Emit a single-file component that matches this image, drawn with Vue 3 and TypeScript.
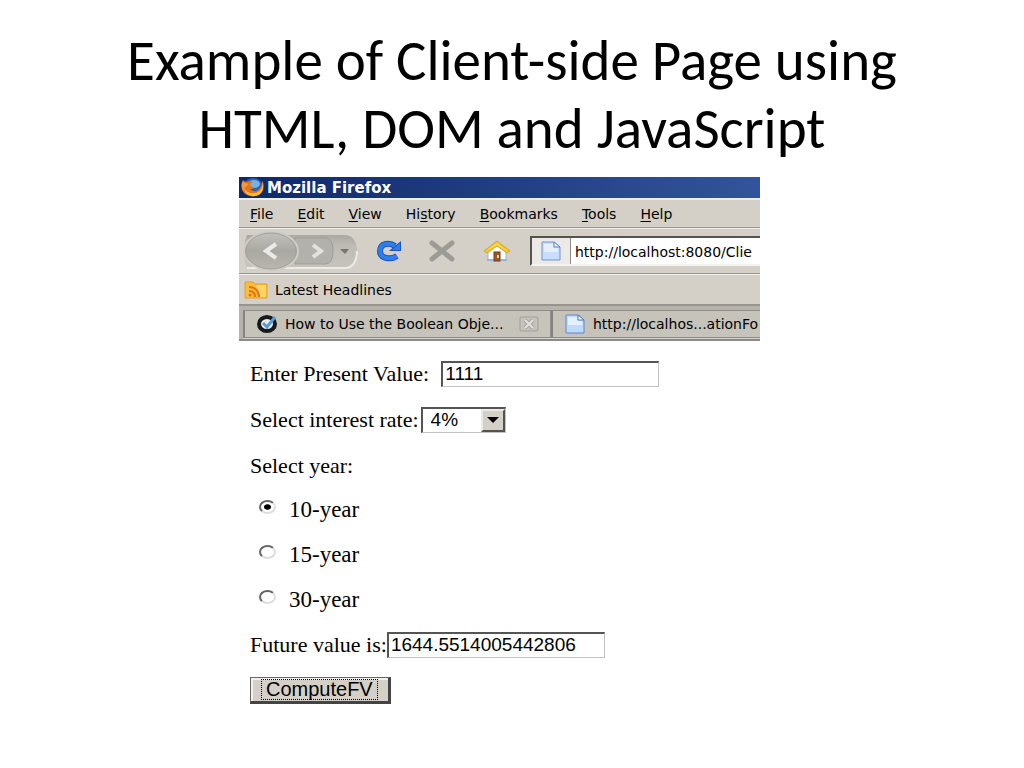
<script setup lang="ts">
import { ref } from 'vue'

interface MenuEntry {
  before: string
  key: string
  after: string
}

const menus: MenuEntry[] = [
  { before: '', key: 'F', after: 'ile' },
  { before: '', key: 'E', after: 'dit' },
  { before: '', key: 'V', after: 'iew' },
  { before: 'Hi', key: 's', after: 'tory' },
  { before: '', key: 'B', after: 'ookmarks' },
  { before: '', key: 'T', after: 'ools' },
  { before: '', key: 'H', after: 'elp' },
]

const years: number[] = [10, 15, 30]
const address = ref('http://localhost:8080/Clie')
const presentValue = ref('1111')
const rate = ref(4)
const year = ref(10)
const futureValue = ref('1644.5514005442806')

function computeFV(): void {
  futureValue.value = String(Number(presentValue.value) * Math.pow(1 + rate.value / 100, year.value))
}
</script>

<template>
  <main class="slide">
    <h1 class="heading">Example of Client-side Page using<br />HTML, DOM and JavaScript</h1>

    <section class="window">
      <header class="titlebar">
        <svg class="firefox" width="26" height="20" viewBox="0 0 26 20">
          <ellipse cx="14" cy="9" rx="10" ry="9" fill="#2b62b5" />
          <ellipse cx="15" cy="6" rx="6" ry="4" fill="#6fb4e6" />
          <path d="M4 2C1 7 2 14 8 17c6 3 14 1 16-5 1-3 1-7-1-9 0 3 0 5-2 7-2 4-8 4-10 1 2 0 3 0 4-2-3 0-4-2-4-3 1-1 2-1 3-2-2-1-4-1-6 0-2 0-3-1-4-2z" fill="#e8741a" />
          <path d="M23 4c1 5-1 10-7 11-5 1-9-1-11-5 1 6 5 8 10 8 7 0 11-7 8-14z" fill="#f9c22e" />
          <path d="M4 3c-2 4-1 8 1 10 0-3 1-4 3-5 0-1 1-2 2-2-2-1-5 0-6-3z" fill="#f59a30" />
        </svg>
        <span>Mozilla Firefox</span>
      </header>

      <nav class="menubar">
        <button v-for="m in menus" :key="m.key + m.after" type="button" class="menu">{{ m.before }}<u>{{ m.key }}</u>{{ m.after }}</button>
      </nav>

      <div class="toolbar">
        <button type="button" class="tool" aria-label="Back and forward">
          <svg width="118" height="42" viewBox="0 0 118 42">
            <defs>
              <linearGradient id="pill" x1="0" y1="0" x2="0" y2="1">
                <stop offset="0" stop-color="#aaa8a2" />
                <stop offset="0.35" stop-color="#bfbcb5" />
                <stop offset="1" stop-color="#c7c4bd" />
              </linearGradient>
              <linearGradient id="disc" x1="0" y1="0" x2="0" y2="1">
                <stop offset="0" stop-color="#c3c1bb" />
                <stop offset="0.5" stop-color="#aaa8a2" />
                <stop offset="1" stop-color="#bab7b0" />
              </linearGradient>
            </defs>
            <path d="M6 5h98c9 0 12 9 12 16s-3 17-12 17H6c-4-9-4-24 0-33z" fill="url(#pill)" />
            <path d="M6 38h98c9 0 12-9 12-17" fill="none" stroke="#eceae5" stroke-width="2" />
            <path d="M54 8h30c6 0 8 6 8 13s-2 13-8 13H54z" fill="#b3b1ab" stroke="#9f9d97" />
            <ellipse cx="30" cy="21" rx="27" ry="19" fill="url(#disc)" stroke="#cfccc5" stroke-width="2" />
            <ellipse cx="30" cy="21" rx="25" ry="18" fill="none" stroke="#a3a19b" />
            <path d="M35 14l-10 7 10 7" fill="none" stroke="#eceae6" stroke-width="4" />
            <path d="M72 15l8 6-8 6" fill="none" stroke="#e3e1dc" stroke-width="4" />
            <path d="M99 19h9l-4 5z" fill="#77756f" />
          </svg>
        </button>
        <button type="button" class="tool reload" aria-label="Reload">
          <svg width="26" height="22" viewBox="0 0 26 22">
            <path d="M19 6C14 2 4 3 4 11c0 8 11 9 17 5" fill="none" stroke="#1755c2" stroke-width="6" />
            <path d="M25 1v10H13z" fill="#1755c2" />
            <path d="M19 6C14 2 4 3 4 11c0 8 11 9 17 5" fill="none" stroke="#2f7fe8" stroke-width="4" />
            <path d="M24 3v7h-8z" fill="#2f7fe8" />
          </svg>
        </button>
        <button type="button" class="tool stop" aria-label="Stop">
          <svg width="26" height="22" viewBox="0 0 26 22">
            <path d="M3 3l20 16M23 3L3 19" fill="none" stroke="#9d9b96" stroke-width="5" stroke-linecap="round" />
          </svg>
        </button>
        <button type="button" class="tool home" aria-label="Home">
          <svg width="28" height="22" viewBox="0 0 28 22">
            <path d="M5 11v9h18v-9l-9-7z" fill="#fff" stroke="#a4b4cc" />
            <path d="M14 1L1 11l3 2 10-7 10 7 3-2z" fill="#f8c92e" stroke="#d5a52c" />
            <path d="M14 3l9 7-9-5-9 5z" fill="#fbd95c" />
            <rect x="11" y="12" width="6" height="9" fill="#9b5a2b" stroke="#6b3c1b" />
            <rect x="14" y="15" width="2" height="3" fill="#e8d48a" />
            <path d="M4 20h6M18 20h6" stroke="#94b5df" stroke-width="2" />
          </svg>
        </button>
        <div class="address">
          <span class="site">
            <svg width="20" height="20" viewBox="0 0 20 20">
              <path d="M1 1h12l6 5v13H1z" fill="#c9defc" stroke="#6f94cd" />
              <path d="M3 3h9v4h5v4H3z" fill="#e4efff" />
              <path d="M13 1v5h6z" fill="#f6faff" stroke="#5f83bd" />
            </svg>
          </span>
          <input v-model="address" type="text" class="url" aria-label="Address" />
        </div>
      </div>

      <div class="bookmarks">
        <svg width="24" height="18" viewBox="0 0 24 18">
          <path d="M1 1h8l2 2h12v14H1z" fill="#f9bd3c" stroke="#e2a02d" />
          <path d="M12 4h10v12H14z" fill="#fdd468" />
          <circle cx="6" cy="14" r="1.5" fill="#e8700f" />
          <path d="M5 10c4 0 6 2 6 6M5 6c6 0 10 4 10 10" fill="none" stroke="#e8700f" stroke-width="2" />
        </svg>
        <a href="#headlines">Latest Headlines</a>
      </div>

      <div class="tabs">
        <div class="tab first">
          <svg width="22" height="18" viewBox="0 0 22 18">
            <ellipse cx="11" cy="9" rx="8" ry="7" fill="#e4eef5" stroke="#17191c" stroke-width="4" />
            <path d="M7 8l4 4 8-10" fill="none" stroke="#5a9bd0" stroke-width="3" />
          </svg>
          <a href="#boolean" class="label">How to Use the Boolean Obje...</a>
          <button type="button" class="close" aria-label="Close tab">
            <svg width="20" height="16" viewBox="0 0 20 16">
              <rect x="1" y="1" width="18" height="14" rx="1" fill="#c5c2bb" stroke="#a19f99" />
              <path d="M6 4l8 8M14 4l-8 8" stroke="#a5a39d" stroke-width="4" />
              <path d="M6 4l8 8M14 4l-8 8" stroke="#e4e2dd" stroke-width="2" />
            </svg>
          </button>
        </div>
        <div class="tab second">
          <svg width="20" height="20" viewBox="0 0 20 20">
            <path d="M1 1h12l6 5v13H1z" fill="#c1d9fc" stroke="#5d87cb" />
            <path d="M3 3h9v4h5v4H3z" fill="#e4efff" />
            <path d="M13 1v5h6z" fill="#f6faff" stroke="#4f79bd" />
          </svg>
          <a href="#form" class="label">http://localhos...ationFo</a>
        </div>
      </div>

      <form class="page" @submit.prevent="computeFV">
        <div class="row">
          <label for="pv">Enter Present Value:</label>
          <input id="pv" v-model="presentValue" type="text" class="field gap" />
        </div>
        <div class="row">
          <label for="rate">Select interest rate:</label>
          <span class="picker">
            <select id="rate" v-model.number="rate">
              <option v-for="r in [4, 5, 6, 7, 8]" :key="r" :value="r">{{ r }}%</option>
            </select>
            <span class="arrow">
              <svg width="12" height="6" viewBox="0 0 12 6"><path d="M0 0h12L6 6z" fill="#000" /></svg>
            </span>
          </span>
        </div>
        <fieldset class="years">
          <legend>Select year:</legend>
          <label v-for="y in years" :key="y" class="year">
            <input v-model="year" type="radio" name="year" :value="y" />
            <span>{{ y }}-year</span>
          </label>
        </fieldset>
        <div class="row last">
          <label for="fv">Future value is:</label>
          <input id="fv" v-model="futureValue" type="text" class="field" />
        </div>
        <button type="submit" class="compute"><span>ComputeFV</span></button>
      </form>
    </section>
  </main>
</template>

<style>
body {
  margin: 0;
  background: #fff;
}
</style>

<style scoped>
* {
  box-sizing: border-box;
}
svg {
  display: block;
  flex: none;
}
button {
  padding: 0;
  border: 0;
  background: none;
  font: inherit;
  color: inherit;
}
a {
  color: inherit;
  text-decoration: none;
}
.slide {
  display: grid;
  grid-template-columns: 239fr 521fr 264fr;
  color: #000;
}
.heading {
  grid-column: 1 / -1;
  margin: 0;
  padding: 27px 0 14px;
  text-align: center;
  font: 400 57px/68px Carlito, Lato, sans-serif;
}
.window {
  grid-column: 2;
  min-width: 0;
  font: 14px/18px "DejaVu Sans", sans-serif;
}
.titlebar {
  display: flex;
  align-items: center;
  gap: 2px;
  height: 21px;
  overflow: hidden;
  background: linear-gradient(90deg, #10286a, #33549a);
  color: #fff;
  font-size: 15px;
  font-weight: 700;
}
.menubar {
  display: flex;
  gap: 24px;
  padding: 5px 11px 4px;
  border-top: 2px solid #efede8;
  border-bottom: 1px solid #97958f;
  background: #d4d0c8;
}
.menu {
  white-space: nowrap;
}
.menu u {
  text-underline-offset: 2px;
}
.toolbar {
  display: flex;
  align-items: center;
  height: 46px;
  padding-left: 2px;
  border-top: 1px solid #f3f1ed;
  border-bottom: 1px solid #97958f;
  background: #d4d0c8;
}
.tool {
  flex: none;
}
.reload {
  margin-left: 17px;
}
.stop {
  margin-left: 27px;
}
.home {
  margin-left: 28px;
}
.address {
  display: flex;
  flex: 1;
  min-width: 0;
  height: 30px;
  margin-left: 19px;
  border: 2px solid #55534f;
  border-right: 0;
  border-bottom: 2px solid #f4f2ee;
  background: #fff;
}
.site {
  display: flex;
  align-items: center;
  padding: 0 9px;
  border-right: 1px solid #8c8a85;
  background: #eceae6;
}
.url {
  flex: 1;
  min-width: 0;
  padding: 2px 0 0 4px;
  border: 0;
  outline: 0;
  background: transparent;
  font: inherit;
}
.bookmarks {
  display: flex;
  align-items: center;
  gap: 7px;
  height: 30px;
  padding-left: 5px;
  border-top: 1px solid #f3f1ed;
  background: #d4d0c8;
}
.tabs {
  display: flex;
  height: 37px;
  padding: 4px 0 0 4px;
  overflow: hidden;
  border-top: 2px solid #96948f;
  border-bottom: 2px solid #8c8a86;
  background: #b6b3ac;
}
.tab {
  display: flex;
  align-items: center;
  height: 28px;
  border: 1px solid #8f8d88;
  border-left: 2px solid #85837f;
  background: #c6c3bb;
  white-space: nowrap;
  box-shadow: 0 4px 0 #d4d0c8;
}
.first {
  flex: 0 0 308px;
  gap: 7px;
  padding-left: 11px;
}
.close {
  margin-left: auto;
  margin-right: 11px;
}
.second {
  flex: 1;
  gap: 8px;
  min-width: 0;
  padding-left: 12px;
  overflow: hidden;
  border-right: 0;
}
.page {
  padding: 19px 11px;
  font: 22px/28px "Liberation Serif", serif;
}
.row {
  display: flex;
  align-items: center;
  height: 27px;
  margin-bottom: 19px;
}
.field {
  width: 218px;
  height: 26px;
  padding: 1px 2px;
  border: 1px solid #c4c2be;
  border-top: 2px solid #555;
  border-left: 2px solid #555;
  border-radius: 0;
  outline: 0;
  background: #fff;
  font: 19px/22px "Liberation Sans", sans-serif;
}
.gap {
  margin-left: 12px;
}
.picker {
  position: relative;
  display: flex;
  margin-left: 2px;
}
.picker select {
  appearance: none;
  width: 85px;
  height: 26px;
  padding: 0 8px;
  border: 1px solid #c4c2be;
  border-top: 2px solid #555;
  border-left: 2px solid #555;
  border-radius: 0;
  outline: 0;
  background: #fff;
  color: #000;
  font: 19px/22px "Liberation Sans", sans-serif;
}
.arrow {
  position: absolute;
  top: 2px;
  right: 1px;
  bottom: 1px;
  display: flex;
  align-items: center;
  justify-content: center;
  width: 24px;
  border: 2px solid #55534f;
  border-top-color: #eceae6;
  border-left-color: #eceae6;
  background: #d4d0c8;
  pointer-events: none;
}
.years {
  display: flex;
  flex-direction: column;
  gap: 17px;
  margin: 0 0 17px;
  padding: 0;
  border: 0;
}
.years legend {
  margin-bottom: 16px;
  padding: 0;
}
.year {
  display: flex;
  align-items: center;
  gap: 13px;
  font-size: 23px;
}
.year input {
  appearance: none;
  width: 17px;
  height: 14px;
  margin: 0 0 6px 9px;
  border: 2px solid #666;
  border-right-color: #dedede;
  border-bottom-color: #dedede;
  border-radius: 50%;
  background: #fff;
}
.year input:checked {
  background: radial-gradient(ellipse at center, #000 3px, transparent 4px);
}
.compute {
  display: block;
  padding: 1px 10px;
  border: 1px solid #666;
  border-right: 3px solid #444;
  border-bottom: 3px solid #444;
  background: #d4d0c8;
  box-shadow: inset 2px 2px 0 #f2f0ec;
  font: 20px/20px "Liberation Sans", sans-serif;
}
.compute span {
  display: block;
  padding: 0 4px;
  border: 1px dotted #000;
  line-height: 19px;
}
</style>
